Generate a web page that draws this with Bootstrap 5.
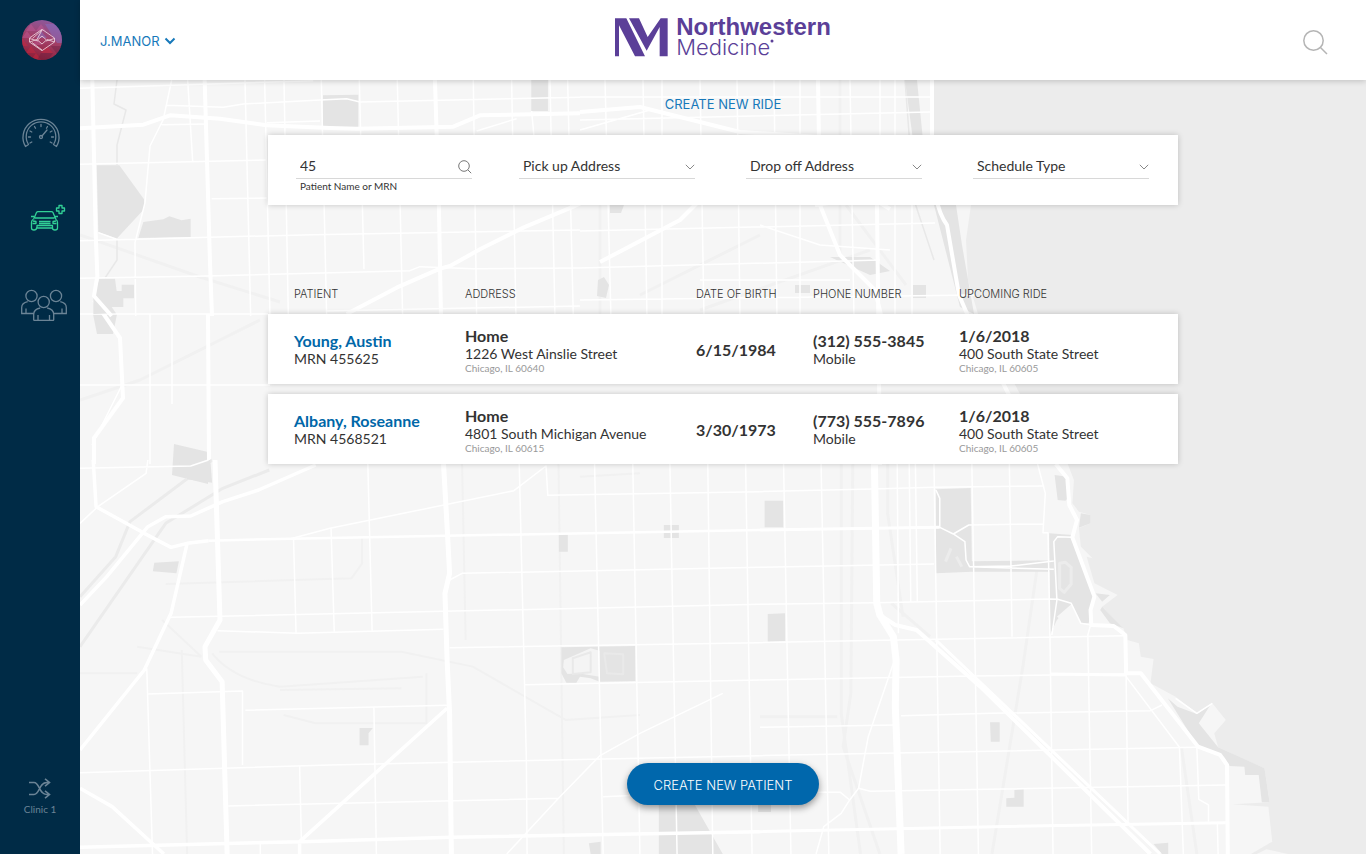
<!DOCTYPE html>
<html lang="en">
<head>
<meta charset="utf-8">
<meta name="viewport" content="width=device-width, initial-scale=1">
<title>Create New Ride</title>
<link href="https://cdn.jsdelivr.net/npm/bootstrap@5.3.0/dist/css/bootstrap.min.css" rel="stylesheet">
<style>
  body { font-family: Lato, "Open Sans", sans-serif; font-size: 14px; line-height: 18px; color: #333; background: #f6f6f6; }
  .side-rail { width: 80px; background: #002b46; color: #6b8496; flex: none; }
  .side-rail a { color: inherit; text-decoration: none; }
  .side-rail .rail-item { height: 86px; }
  .side-rail .rail-item.current { color: #32d196; }
  .rail-clinic { font-size: 10px; line-height: 12px; margin-bottom: 39px; }
  .caps { font-family: Inter, sans-serif; font-size: 13px; line-height: 20px; font-weight: 400; }
  .top-bar { height: 80px; background: #fff; box-shadow: 0 1px 6px rgba(0,0,0,.2); z-index: 2; padding: 0 20px; }
  .top-bar .side { flex: 1 1 0; }
  .user-menu { color: #1779ba; padding-top: 2px; }
  .search-toggle { margin-right: 18px; }
  .brand { color: #5b3f98; text-decoration: none; font-family: "Liberation Sans", sans-serif; margin-top: -6px; }
  .brand-name { font-size: 24px; line-height: 21px; font-weight: 700; }
  .brand-sub { font-family: Inter, "Liberation Sans", sans-serif; font-size: 22px; line-height: 21px; font-weight: 300; }
  .map-art { z-index: 0; }
  .map-art path { vector-effect: non-scaling-stroke; }
  .page-body { z-index: 1; max-width: 910px; margin: 0 auto; }
  .page-title { color: #1779ba; margin: 14px 0 21px; }
  .sheet { background: #fff; box-shadow: 0 0 6px rgba(0,0,0,.2); }
  .filters { min-height: 70px; padding: 20px 29px 0 28px; gap: 51px; }
  .filters .field { flex: 1 1 0; min-width: 0; }
  .filters .field-patient { margin-right: -4px; }
  .field-line { height: 24px; border-bottom: 1px solid #d8d8d8; }
  .field-line input, .field-line select { border: 0; background: transparent; color: #333; padding: 0 4px 2px; height: 22px; line-height: 20px; appearance: none; min-width: 0; outline: 0; }
  .field-note { font-size: 10px; line-height: 14px; padding-left: 4px; }
  .rides { table-layout: fixed; border-collapse: separate; border-spacing: 0 10px; margin-top: 69px; width: 100%; }
  .rides th { font-family: Inter, sans-serif; font-weight: 300; font-size: 11px; line-height: 20px; padding: 0; color: #333; }
  .rides tbody tr { background: #fff; box-shadow: 0 0 6px rgba(0,0,0,.2); }
  .rides td { height: 70px; padding: 2px 0 0; vertical-align: middle; }
  .rides th:first-child, .rides td:first-child { padding-left: 26px; }
  .col-patient { width: 197px; } .col-address { width: 231px; } .col-birth { width: 117px; } .col-phone { width: 146px; }
  .strong-line { font-size: 16px; font-weight: 700; display: block; }
  a.strong-line { color: #0067a8; text-decoration: none; }
  .city { font-size: 10px; line-height: 11px; color: #999; display: block; }
  .new-patient { width: 192px; height: 42px; background: #0067ac; color: #fff; border: 0; box-shadow: 0 3px 7px rgba(0,0,0,.4); margin: auto auto 49px; padding: 2px 0 0; font-weight: 300; }
</style>
</head>
<body>
<div class="d-flex min-vh-100">
  <nav class="side-rail d-flex flex-column align-items-center" aria-label="Main">
    <a href="#" class="mt-3 mb-4 d-block" aria-label="Home">
      <svg class="d-block ms-1 mt-1 mb-1" width="40" height="42" viewBox="21 20 40 42">
        <defs>
          <linearGradient id="orb" x1=".6" y1="0" x2=".3" y2="1"><stop offset="0" stop-color="#8b5a9f"/><stop offset=".45" stop-color="#a33f68"/><stop offset="1" stop-color="#8d1c33"/></linearGradient>
          <clipPath id="orbClip"><circle cx="41" cy="40" r="20"/></clipPath>
        </defs>
        <g clip-path="url(#orbClip)">
          <rect x="20" y="19" width="42" height="42" fill="url(#orb)"/>
          <path fill="#c45a9a" opacity=".45" d="M30 24l5 7H25zM40 24l5 7H35zM26 31l5 7H21zM36 38l5 7H31z"/>
          <path fill="#8370c4" opacity=".5" d="M44 24h12l6 10H50zM50 34h12v9H56zM40 31l6 7H35z"/>
          <path fill="#c8283f" opacity=".5" d="M21 38l6 8H21zM30 46l5 7H25zM46 46l6 7H40zM35 53l5 7H30z"/>
          <path fill="#5e1c3f" opacity=".35" d="M50 46h12v8H56zM40 53h12l-5 7H36z"/>
        </g>
        <g fill="none" stroke="#e9cbd8" stroke-width=".9" stroke-linejoin="round">
          <path d="M41 29.300L53.500 38v4L41 50.700 28.500 42v-4zM28.500 38.500L37 41M53.500 38.500L45 41M28.500 42l7.500-2.500M53.500 42L46 39.500M41 30l-9.500 8.500M41 36l4.500 4-4.500 4-4.500-4zM36 39.500L41 30M31 42.500L41 50"/>
        </g>
      </svg>
    </a>
    <a href="#" class="rail-item w-100 d-flex align-items-center justify-content-center" aria-label="Dashboard">
      <svg class="ms-1" width="44" height="32" viewBox="22 117 44 32" fill="none" stroke="currentColor" stroke-width="1.300" stroke-linecap="round">
        <path d="M27.500 146.500a18 18 0 1 1 31 0M30.500 144.500a14.800 14.800 0 1 1 25 0M27.500 146.500l3-2M58.500 146.500l-3-2"/>
        <circle cx="43" cy="137" r="1.500"/><path d="M44 136l5-6M43 124.500v2M36.500 126.500l1 1.800M49.500 126.500l-1 1.800M32 131l1.800 1M54 131l-1.800 1M30.500 137h2M55.500 137h-2M32 143l1.800-1M54 143l-1.800-1"/>
      </svg>
    </a>
    <a href="#" class="rail-item current w-100 d-flex align-items-center justify-content-center" aria-label="New ride">
      <svg class="ms-3" width="36" height="30" viewBox="24 204 36 30" fill="none" stroke="currentColor" stroke-width="1.300" stroke-linejoin="round">
        <path d="M27.500 219.500l3-7q.5-.9 1.500-.9h13.500q1 0 1.500.9l3 7M29 218h19.500M27 219.500q-1.500 1-1.500 3v5.500q0 2 2.500 2t2.500-2h16q0 2 2.500 2t2.500-2v-5.500q0-2-1.500-3M25 216.500h3M52 216.500h-3"/>
        <path d="M33 221.500h11.500M33 223.500h11.500M31 228v-2.500h15.500v2.500M27 221l3 .5v2h-3.500M50 221l-3 .5v2h3.500"/>
        <path d="M53 205.500h3v2.500h2.500v3H56v2.500h-3V211h-2.500v-3H53z"/>
      </svg>
    </a>
    <a href="#" class="rail-item w-100 d-flex align-items-center justify-content-center" aria-label="Patients">
      <svg class="ms-2" width="48" height="34" viewBox="20 288 48 34" fill="none" stroke="currentColor" stroke-width="1.300">
        <circle cx="31.500" cy="296" r="5.600"/><circle cx="56" cy="296" r="5.600"/><circle cx="43.700" cy="302" r="5.600"/>
        <path d="M34 313.500H21.700v-6q0-4.500 6-5.800M53 313.500h13.300v-6q0-4.500-6-5.800M26 313.500v-5M62 313.500v-5M33.700 320.300v-6q0-5 6.500-6.300M53.700 320.300v-6q0-5-6.500-6.300M33.500 320.300h20.400M38 320v-5M49.500 320v-5"/>
      </svg>
    </a>
    <a href="#" class="rail-clinic mt-auto d-flex flex-column align-items-center">
      <svg class="mb-1" width="22" height="22" viewBox="0 0 22 22" fill="none" stroke="currentColor" stroke-width="1.600"><path d="M0 5.500h5c6 0 4.500 12 13 12h2.500M0 17.500h5c6 0 4.500-12 13-12h2.500M16 1.800l4.500 3.700L16 9.200M16 13.800l4.500 3.700-4.500 3.700"/></svg>
      Clinic 1
    </a>
  </nav>

  <div class="flex-grow-1 d-flex flex-column">
    <header class="top-bar position-relative d-flex align-items-center">
      <div class="side">
        <button type="button" class="user-menu caps btn px-0 pb-0 border-0 d-flex align-items-center gap-1">J.MANOR
          <svg width="12" height="8" viewBox="0 0 12 8" fill="none" stroke="currentColor" stroke-width="2"><path d="M1.500 1.500L6 6l4.500-4.500"/></svg>
        </button>
      </div>
      <a href="#" class="brand d-flex align-items-center">
        <svg class="me-2" width="53" height="39" viewBox="48 54 159 115" fill="#5b3f98"><path d="M48 54h34l56 114h-30L60 75v93H48zM90 54h30l26 56 39-56h21v114h-24V80l-39 71z"/></svg>
        <span class="d-flex flex-column"><span class="brand-name">Northwestern</span><span class="brand-sub d-flex">Medicine<svg width="4" height="10" viewBox="0 0 4 10" aria-hidden="true"><circle cx="2" cy="4" r="1.500" fill="#5b3f98"/></svg></span></span>
      </a>
      <div class="side d-flex justify-content-end">
        <button type="button" class="search-toggle btn p-0 border-0" aria-label="Search">
          <svg class="d-block mt-1" width="25" height="25" viewBox="0 0 25 25" fill="none" stroke="#b5b5b5" stroke-width="1.500"><circle cx="10.500" cy="10.500" r="9.700"/><path d="M17.500 17.500l6.500 6.500"/></svg>
        </button>
      </div>
    </header>

    <main class="position-relative flex-grow-1 d-flex flex-column">
      <svg class="map-art position-absolute top-0 start-0 w-100 h-100" viewBox="80 80 1286 774" preserveAspectRatio="xMinYMin slice" aria-hidden="true" fill="none" stroke-linejoin="round">
        <!-- lake -->
        <path fill="#ececec" d="M933 80V140L950 205H971L966 240 968 280 978 314 1020 394 1040 440 1069 465H1600V80z"/>

        <!-- northern districts -->
        <g stroke="#f1f1f1" stroke-width="3">
          <path d="M80 235l120 42 80 25M840 80v180M846 205l60 80M700 310l170-60M640 295l120-60M600 205v110M80 400l60-20 120-60"/>
          <path stroke="#e8e8e8" stroke-width="1.500" d="M117 80l-3 24 12 6-9 35v20M905 80l9 120 20 60M910 80l8 60M117 240v20l-12 18"/>
        </g>
        <path fill="#e4e4e4" d="M610 205h14l-3 8h-11zM913 285h13v13h-13zM598 280l6-3 5 8-3 13-9-2zM830 257h40l20 14-20 4zM795 285h15v8h-15zM934 205h22l6 40 12 69-14-7zM905 80h12l6 60h-10zM93 314h24l-4 20H97zM174 444l34 8v32l-36-9z"/>
        <g stroke="#fff" stroke-width="1.500">
          <path d="M580 97h350M580 120l350-8M580 231l355-8M580 268l300-8M580 300l395-5M605 80l6 240M643 80l4 240M662 80v240M700 80l4 240M737 80l3 240M774 80l3 240M800 80v240M850 80l4 240M880 80v60M895 80v240M912 205v115M700 280h150M760 225l60 20 70 5M580 130l70-20M80 314h188M80 385h190M150 314v150M172 314v90M122 385l-30 60"/>
          <path stroke-width="4" d="M580 112l60-5 100 25 80 5M818 80l2 125 20 50 35 35 6 25M877 205l3 260M600 262l80-42 40-40M932 80v70q0 55 15 75l12 70 15 35 30 55 20 40 24 30M815 205l55-8 20 12"/>
          <path stroke-width="4" d="M94 300l26 38 3 60-29 40v26M208 314l1 150"/>
        </g>
        <g transform="translate(80 76) scale(.3333)">
          <path fill="#e4e4e4" d="M50 268h68l74 102v30l-82 88-55-20zM190 438l60-8 18-9 37 12 27-5v55l-157 3zM729 58l106-2v99l-106-3zM1354 12h50v93h-50zM58 608h47l5 37h15v-19h37v41h-32v26H95l13 19-68 2v-50z"/>
          <g stroke="#fff" stroke-width="1.500">
            <path d="M0 37L700 14M275 12L250 130 210 210 195 380 165 500 167 720M323 12L338 255M260 88L430 94 490 84 720 72 800 68 840 78 1500 64M245 146L380 144M560 140L720 135M0 265L560 252M395 368L565 366M0 494L700 476 1500 462M55 470L110 490M0 607L380 600 990 584 1020 572 1180 578 1500 576M740 705L1500 690M1190 165L1310 128"/>
            <path d="M495 12L512 720M554 12L570 720M612 12L625 720M724 12L740 720M838 12L852 580M952 12L968 720M1180 12L1190 720M1295 12L1308 720M1355 105L1362 180M1410 12L1425 720M1463 12L1480 720"/>
            <path stroke-width="4" d="M37 12L47 470 52 600 42 660 95 720M374 12L390 560 396 720M0 157L190 146 270 118 420 128 560 148 750 156 830 158 1120 152 1200 118 1500 112M1065 12L1077 400 1083 720M800 714L950 635 1080 578 1110 570 1200 520 1330 455 1480 392 1600 335"/>
          </g>
        </g>

        <!-- south-western districts -->
        <g transform="translate(80 460) scale(.3571 .3333)">
          <g stroke="#f1f1f1" stroke-width="2">
            <path stroke="#ebebeb" stroke-width="3" d="M0 410L100 290 140 185 370 0M0 560L240 190 400 85 530 30"/>
            <path d="M240 372L760 355 790 310V235M285 570L300 1182M1070 12L1080 540M1340 12L1355 1182M370 580Q430 660 560 680L960 650M390 575H900L1100 620 1360 780 1568 765M560 690L900 685M570 765L660 790H970V640M160 560L340 590M0 640H160M1568 40L1400 50M230 480L340 590"/>
          </g>
          <path fill="#e4e4e4" d="M275 0h90l5 68-70-10zM208 308l69-4-7 36-66-6zM1341 224l25-2v53h-25zM783 804h37l-12 16v36h-25zM1348 562l207-4v105l-100 2-25-10-30-5-10 18h-28l-14-28zM1425 1150l33-5v37h-28zM1635 195h42v39h-42zM1621 1020L1722 1035 1800 1182H1621zM1899 1035h36v21h-36z"/>
          <path fill="#f4f4f4" d="M1355 600l75-35 25 7v78l-60-10-30 2-12-20z"/><path stroke="#e9e9e9" stroke-width="2" d="M1380 595l50-18v60l-50 5zM1468 580l8 60 45 3V583z"/>
          <g stroke="#fff" stroke-width="1.500">
            <path d="M0 25L310 18 360 0M190 0L185 40 50 140 0 190M590 236L700 205 1215 92 1305 18 1310 106 1904 95M1035 360L1070 340 1904 322M255 472L1904 433M385 512L610 520 1018 508M1035 563L1904 548M1245 674L1904 660M190 702L455 693V915M463 751L1028 736M0 938L700 915 1904 887M415 1038L1340 1015M1800 700L1568 820 1455 888 1340 1015 1195 1182M1465 1010L1560 1006"/>
            <path d="M598 236L605 520M703 205L712 515M806 12L818 512M823 740L830 1182M615 918L620 1145M187 625L203 1182M505 1150V1182M1230 12L1250 900 1252 1182M1441 12L1465 1182M1548 12L1568 1182M1652 12L1672 1182M1758 12L1772 1182M1864 12L1882 1182"/>
            <path stroke-width="2.500" d="M360 242L590 236 1904 210M180 0"/>
            <path stroke-width="3.500" d="M300 250L255 460 180 630 0 870M1028 745L615 1145V1182M0 1162L620 1145 1040 1132 1904 1115M0 435L75 350 190 200 240 170 310 168 400 125 500 90 660 15M0 985L90 1040 235 1182M37 0L45 140 180 220 255 262 300 250 360 242"/>
            <path stroke-width="5" d="M378 0L392 480 350 560 352 600 398 665 412 1182M1018 12L1028 200 1035 340 1022 400 1028 600 1035 760 1040 1182"/>
          </g>
        </g>

        <!-- south-eastern districts and the shore -->
        <g transform="translate(760 460) scale(.3866 .3333)">
          <path fill="#ececec" d="M796 12L812 60 808 130 825 155 855 165V190L825 205 830 260 860 295 845 290 865 370 925 405 885 440 940 505 950 540 980 550 985 590 1018 597 1010 670 1075 710 1130 760 1170 730 1205 780 1175 820 1185 862 1305 925 1318 1027 1222 1033 1315 1040 1325 1145 1270 1182H1285L1310 1168 1365 1182H2200V12z"/>
          <g stroke="#f1f1f1" stroke-width="3"><path d="M210 12V760L260 1182M240 12L235 700 215 860 310 1182M720 300L680 620 600 1182M330 12V160L370 470M340 430L440 530M1090 862L1130 1182M0 770H200"/></g>
          <path fill="#e4e4e4" d="M762 45l33 5 5 60-10 12-20-2zM830 160l25 5v25l-30 13zM455 88l90-4 3 220 212-3v34H548l-93 5zM748 220l60 5 57 185-15 80h-20l-25-55-37 45-18 45zM868 400l37 5-20 20zM885 440l55 65-35-15-25-40zM12 122h48v80H12zM20 462l45-2v83l-45 2zM595 787h25v58h-23zM658 990l24-2v52h-45v-25l21-2zM1055 715L1080 740 1130 762 1165 735 1135 790 1185 862 1240 890 1305 925 1318 1027H1298L1290 945H1255L1253 920 1215 918 1200 890 1133 860zM1018 1152l38-4v34h-16z"/>
          <path fill="#f6f6f6" d="M768 470l38-38 18 58-50 10 14-12z"/><path stroke="#ececec" stroke-width="3" d="M775 310v75l12 12 18-25v-50l-15-15zM480 305l14-40M508 290l14 30"/>
          <g stroke="#fff" stroke-width="1.500">
            <path d="M0 95L290 87 450 82 735 78M0 322L450 312M0 433L300 428 750 417 770 418 805 430 830 490 857 495M0 548L945 527M0 660L550 648 950 642M365 767L600 760 1010 752 1040 735M0 802L350 795M0 887L1130 862M255 985L285 994 1205 975M150 997H208L232 1020 210 1060 165 1100 145 1182M345 610L280 830 255 985 232 1020"/>
            <path d="M61 12L80 1182M158 12L178 1182M355 12L358 520M386 12L390 425M402 12L407 425M450 12L466 1182M548 12L565 1182M645 12L652 530M718 12L738 100 732 218H745L750 525 758 1182M855 495L848 525 858 1182M947 645L952 1090M947 650L1085 862 1095 1182M1130 862L1135 1018 1160 1035V1085M1183 1090L1185 1182M455 90L465 115V202L500 222 530 245 533 300 542 320 650 318 760 303M500 222L540 195 732 192M542 320L760 328M808 232L770 230 760 245 768 420 755 525M1075 715L1130 760 1170 730"/>
            <path stroke-width="3" d="M0 210L465 202M0 1115L480 1103 1205 1088M750 642L947 645M455 540L1035 1182"/>
            <path stroke-width="4" d="M310 465L350 495 405 510 570 680 1010 1182M765 12L795 55 800 135 820 180 808 232 865 410 855 450 857 495 915 498 945 525 947 640H985L1133 860 1190 885 1208 915 1210 1182"/>
            <path stroke-width="7" d="M296 12L302 430 310 465 345 530 352 600 350 740 365 1182"/>
          </g>
        </g>
      </svg>

      <div class="page-body position-relative w-100 flex-grow-1 d-flex flex-column">
        <h1 class="page-title caps text-center">CREATE NEW RIDE</h1>
        <form class="sheet filters d-flex">
          <div class="field field-patient">
            <div class="field-line d-flex align-items-center">
              <input class="flex-grow-1" type="text" id="patient" value="45">
              <svg class="flex-shrink-0" width="14" height="14" viewBox="0 0 14 14" fill="none" stroke="#777"><circle cx="6" cy="6" r="5.300"/><path d="M9.800 9.800l3.400 3.400"/></svg>
            </div>
            <label class="field-note d-block" for="patient">Patient Name or MRN</label>
          </div>
          <div class="field field-line d-flex align-items-center">
            <select class="flex-grow-1" aria-label="Pick up Address"><option>Pick up Address</option></select>
            <svg class="flex-shrink-0" width="10" height="6" viewBox="0 0 10 6" fill="none" stroke="#888"><path d="M.8.800L5 5 9.200.800"/></svg>
          </div>
          <div class="field field-line d-flex align-items-center">
            <select class="flex-grow-1" aria-label="Drop off Address"><option>Drop off Address</option></select>
            <svg class="flex-shrink-0" width="10" height="6" viewBox="0 0 10 6" fill="none" stroke="#888"><path d="M.8.800L5 5 9.200.800"/></svg>
          </div>
          <div class="field field-line d-flex align-items-center">
            <select class="flex-grow-1" aria-label="Schedule Type"><option>Schedule Type</option></select>
            <svg class="flex-shrink-0" width="10" height="6" viewBox="0 0 10 6" fill="none" stroke="#888"><path d="M.8.800L5 5 9.200.800"/></svg>
          </div>
        </form>

        <table class="rides">
          <thead>
            <tr>
              <th class="col-patient" scope="col">PATIENT</th>
              <th class="col-address" scope="col">ADDRESS</th>
              <th class="col-birth" scope="col">DATE OF BIRTH</th>
              <th class="col-phone" scope="col">PHONE NUMBER</th>
              <th scope="col">UPCOMING RIDE</th>
            </tr>
          </thead>
          <tbody>
            <tr>
              <td><a href="#" class="strong-line">Young, Austin</a>MRN 455625</td>
              <td><span class="strong-line">Home</span>1226 West Ainslie Street<span class="city">Chicago, IL 60640</span></td>
              <td><span class="strong-line">6/15/1984</span></td>
              <td><span class="strong-line">(312) 555-3845</span>Mobile</td>
              <td><span class="strong-line">1/6/2018</span>400 South State Street<span class="city">Chicago, IL 60605</span></td>
            </tr>
            <tr>
              <td><a href="#" class="strong-line">Albany, Roseanne</a>MRN 4568521</td>
              <td><span class="strong-line">Home</span>4801 South Michigan Avenue<span class="city">Chicago, IL 60615</span></td>
              <td><span class="strong-line">3/30/1973</span></td>
              <td><span class="strong-line">(773) 555-7896</span>Mobile</td>
              <td><span class="strong-line">1/6/2018</span>400 South State Street<span class="city">Chicago, IL 60605</span></td>
            </tr>
          </tbody>
        </table>

        <button type="button" class="new-patient caps rounded-pill">CREATE NEW PATIENT</button>
      </div>
    </main>
  </div>
</div>
<script src="https://cdn.jsdelivr.net/npm/bootstrap@5.3.0/dist/js/bootstrap.bundle.min.js"></script>
</body>
</html>
